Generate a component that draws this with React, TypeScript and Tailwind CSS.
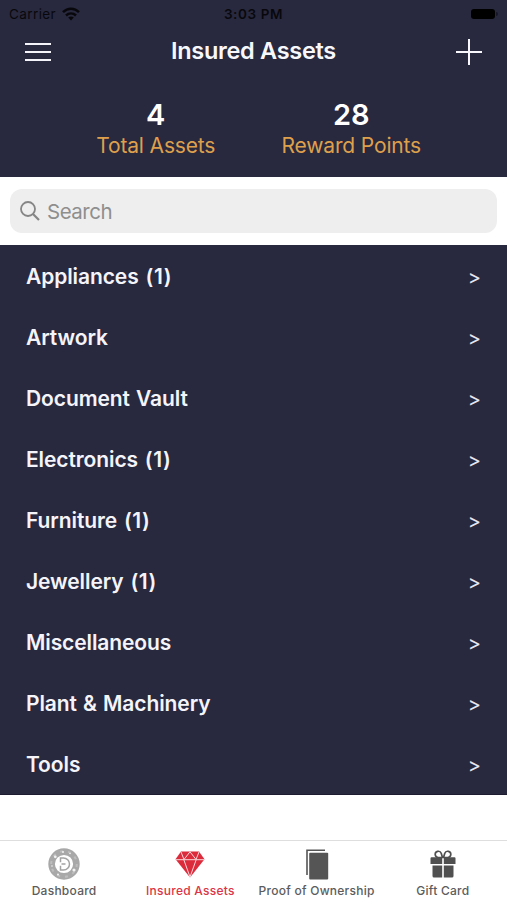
import React from 'react';

interface ITab {
  label: string;
  icon: JSX.Element;
  labelClass: string;
}

const categories = [
  { name: 'Appliances', count: 1 },
  { name: 'Artwork', count: 0 },
  { name: 'Document Vault', count: 0 },
  { name: 'Electronics', count: 1 },
  { name: 'Furniture', count: 1 },
  { name: 'Jewellery', count: 1 },
  { name: 'Miscellaneous', count: 0 },
  { name: 'Plant & Machinery', count: 0 },
  { name: 'Tools', count: 0 },
];

function WifiIcon() {
  return (
    <svg className="w-[18px] h-[14px]" viewBox="0 0 18 14" fill="none" stroke="#08080c" strokeWidth="2.5">
      <path d="M1 5.2C5.6.6 12.4.6 17 5.2" />
      <path d="M4 8.5c2.9-2.8 7.1-2.8 10 0" />
      <path d="M9 13.4 6.2 10.6c1.6-1.5 4-1.5 5.6 0z" fill="#08080c" stroke="none" />
    </svg>
  );
}

function CoinIcon() {
  return (
    <svg className="w-8 h-8" viewBox="0 0 32 32" fill="none">
      <circle cx="16" cy="16" r="12.4" stroke="#a8a8a8" strokeWidth="6.6" />
      <circle cx="16" cy="16" r="12.8" stroke="#bdbdbd" strokeWidth="2" strokeDasharray="3 5" />
      <circle cx="7.3" cy="8.8" r="1.4" fill="#f2f2f2" />
      <circle cx="15" cy="4" r="1" fill="#f2f2f2" />
      <circle cx="22" cy="5.5" r=".8" fill="#f2f2f2" />
      <circle cx="26" cy="22" r="1.6" fill="#f2f2f2" />
      <circle cx="10" cy="26.5" r="1" fill="#f2f2f2" />
      <circle cx="4" cy="18" r=".8" fill="#f2f2f2" />
      <path d="M12.5 14.2V10h3a6 6 0 0 1 0 12h-3v-4.2M13.5 16h4" stroke="#a3a3a3" strokeWidth="1.5" />
    </svg>
  );
}

function DiamondIcon() {
  return (
    <svg className="w-[30px] h-[27px]" viewBox="0 0 30 27">
      <path d="M6 .5h18l5.5 7.7L15 26.5.5 8.2z" fill="#dc2c3c" />
      <path
        d="M1 8.7h28M6 1l3 7.5L15 .8l6 7.7L24 1M8.8 8.7 15 26l6.2-17.3"
        fill="none"
        stroke="#f8d5d8"
        strokeWidth="1"
      />
    </svg>
  );
}

function DocumentsIcon() {
  return (
    <svg className="w-6 h-[31px]" viewBox="0 0 24 31">
      <path d="M2 26V1.2h18" fill="none" stroke="#555" strokeWidth="1.6" />
      <rect x="4.2" y="3.8" width="19" height="26.6" rx="1" fill="#555" />
    </svg>
  );
}

function GiftIcon() {
  return (
    <svg className="w-[26px] h-7" viewBox="0 0 26 28">
      <path
        d="M12.5 7.5H8.2a3.1 3.1 0 1 1 3-4.2zM13.5 7.5h4.3a3.1 3.1 0 1 0-3-4.2z"
        fill="none"
        stroke="#505050"
        strokeWidth="1.7"
      />
      <path d="M1.5 7.2h10.7V14H.5V8.2a1 1 0 0 1 1-1zM13.8 7.2h10.7a1 1 0 0 1 1 1V14H13.8z" fill="#505050" />
      <path d="M2.5 15.5h9.7v12H4a1.5 1.5 0 0 1-1.5-1.5zM13.8 15.5h9.7V26a1.5 1.5 0 0 1-1.5 1.5h-8.2z" fill="#505050" />
    </svg>
  );
}

const tabs: ITab[] = [
  { label: 'Dashboard', icon: <CoinIcon />, labelClass: 'text-[#5c5c5c]' },
  { label: 'Insured Assets', icon: <DiamondIcon />, labelClass: 'text-[#dc3545]' },
  { label: 'Proof of Ownership', icon: <DocumentsIcon />, labelClass: 'text-[#5c5c5c]' },
  { label: 'Gift Card', icon: <GiftIcon />, labelClass: 'text-[#5c5c5c]' },
];

function StatusBar() {
  return (
    <div className="h-7 grid grid-cols-3 items-center px-[9px] text-[#08080c]">
      <div className="flex items-center gap-[6px]">
        <span className="text-[13.5px] tracking-[0.4px]">Carrier</span>
        <WifiIcon />
      </div>
      <span className="text-center text-[13.5px] font-semibold tracking-[0.6px]">3:03 PM</span>
      <div className="flex items-center justify-end gap-px">
        <div className="w-6 h-[10px] rounded-[3px] bg-black" />
        <div className="w-[2px] h-1 rounded-r bg-[#17172a]" />
      </div>
    </div>
  );
}

function Stat({ value, label }: { value: number; label: string }) {
  return (
    <div className="flex flex-col items-center">
      <p className="text-[29px] leading-[34px] font-semibold text-white">{value}</p>
      <p className="text-[21px] leading-[28px] tracking-[-0.15px] text-[#dfa04c] whitespace-nowrap">{label}</p>
    </div>
  );
}

export default function App() {
  return (
    <div className="w-full h-[900px] flex flex-col bg-white font-['Inter','Liberation_Sans',sans-serif] overflow-hidden">
      <header className="h-[177px] shrink-0 bg-[#28283f]">
        <StatusBar />
        <div className="h-12 flex items-center justify-between px-[25px]">
          <div className="w-[26px] flex flex-col gap-[6px]">
            <div className="h-[2px] bg-[#f4f4fa]" />
            <div className="h-[2px] bg-[#f4f4fa]" />
            <div className="h-[2px] bg-[#f4f4fa]" />
          </div>
          <h1 className="pb-[2px] text-[23.5px] font-semibold tracking-[-0.3px] text-[#f8f8fc]">Insured Assets</h1>
          <svg className="w-[26px] h-[26px]" viewBox="0 0 26 26" stroke="#f8f8fc" strokeWidth="2">
            <path d="M0 13h26M13 0v26" />
          </svg>
        </div>
        <div className="grid grid-cols-2 px-[58px] pt-[22px]">
          <Stat value={4} label="Total Assets" />
          <Stat value={28} label="Reward Points" />
        </div>
      </header>

      <div className="h-[68px] shrink-0 px-[10px] pt-3">
        <div className="h-11 flex items-center gap-[7px] rounded-xl bg-[#eeeeee] pl-[10px]">
          <svg className="w-5 h-5" viewBox="0 0 20 20" fill="none" stroke="#858585" strokeWidth="1.8">
            <circle cx="8" cy="8" r="7" />
            <path d="m13 13 6 6" strokeWidth="2.2" />
          </svg>
          <span className="pt-[2px] text-[20.5px] tracking-[-0.5px] text-[#8e8e8e]">Search</span>
        </div>
      </div>

      <ul className="h-[550px] shrink-0 grid grid-rows-9 bg-[#28283f] border-b border-[#1c1b30]">
        {categories.map(({ name, count }) => (
          <li key={name} className="flex items-center justify-between px-[26px] pt-[2px] text-[#f4f4fa]">
            <span className="text-[21px] font-semibold tracking-[-0.1px] [word-spacing:1px]">
              {name}
              {count > 0 && (
                <span className="tracking-[0.6px]">{` (${count})`}</span>
              )}
            </span>
            <span className="text-[20px] text-[#e6e6f0]">&gt;</span>
          </li>
        ))}
      </ul>

      <nav className="mt-auto h-[60px] shrink-0 grid grid-cols-4 border-t border-[#dedede] px-px">
        {tabs.map(({ label, icon, labelClass }) => (
          <div key={label} className="flex flex-col items-center">
            <div className="h-[42px] pt-1 flex items-center">{icon}</div>
            <span className={`text-[12px] leading-4 font-medium tracking-[0.25px] whitespace-nowrap ${labelClass}`}>
              {label}
            </span>
          </div>
        ))}
      </nav>
    </div>
  );
}
